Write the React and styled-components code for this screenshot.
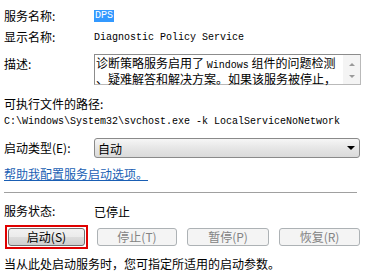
import React from "react";
import styled, { createGlobalStyle } from "styled-components";

const cjk = `"Noto Sans CJK SC", "Liberation Sans", sans-serif`;
const mono = `"Liberation Mono", "Noto Sans CJK SC", monospace`;

const GlobalStyle = createGlobalStyle`
  html, body {
    margin: 0;
    padding: 0;
    background: #ffffff;
  }
  body {
    font-family: ${cjk};
    font-size: 12px;
    color: #000;
  }
`;

const Page = styled.div`
  width: 369px;
  height: 275px;
  padding: 0 4px;
  box-sizing: border-box;
  overflow: hidden;
`;

const Row = styled.div`
  display: flex;
  align-items: ${(p) => (p.$top ? "flex-start" : "center")};
  height: ${(p) => p.$h}px;
  margin-top: ${(p) => p.$mt || 0}px;
`;

const Label = styled.div`
  width: 90px;
  flex: none;
  line-height: 14px;
  padding-top: ${(p) => p.$pt || 0}px;
`;

const Selected = styled.span`
  background: #3399ff;
  color: #fff;
  font-family: ${mono};
  font-size: 10px;
  line-height: 12px;
  padding: 0 1px;
`;

const Mono = styled.span`
  font-family: ${mono};
  font-size: 10px;
`;

const TextBox = styled.div`
  display: flex;
  width: 267px;
  height: 31px;
  box-sizing: border-box;
  border: 1px solid #b9b9b9;
  border-top-color: #8c8c8c;
  border-left-color: #8c8c8c;
`;

const TextBody = styled.div`
  flex: 1;
  padding: 1px 0 0 1px;
  line-height: 13px;
  white-space: nowrap;
`;

const ScrollBar = styled.div`
  width: 17px;
  flex: none;
  background: #f4f4f4;
  display: flex;
  flex-direction: column;
  align-items: center;
  justify-content: space-between;
  padding: 8px 0 6px;
  box-sizing: border-box;
`;

const Arrow = styled.div`
  width: 0;
  height: 0;
  border-left: 3px solid transparent;
  border-right: 3px solid transparent;
  ${(p) =>
    p.$down
      ? "border-top: 3px solid #9a9a9a;"
      : "border-bottom: 3px solid #9a9a9a;"}
`;

const Line = styled.div`
  line-height: 14px;
  margin-top: ${(p) => p.$mt || 0}px;
`;

const Select = styled.div`
  width: 266px;
  height: 20px;
  box-sizing: border-box;
  border: 1px solid #8a8a8a;
  border-radius: 3px;
  background: linear-gradient(#f6f6f6, #e6e6e6 50%, #dadada);
  display: flex;
  align-items: center;
  justify-content: space-between;
  padding: 0 4px 0 3px;
`;

const Caret = styled.div`
  width: 0;
  height: 0;
  border-left: 4px solid transparent;
  border-right: 4px solid transparent;
  border-top: 4px solid #000;
`;

const Link = styled.a`
  display: block;
  color: #1a5fb4;
  text-decoration: underline;
  line-height: 14px;
  margin-top: ${(p) => p.$mt}px;
  width: max-content;
`;

const Separator = styled.div`
  height: 1px;
  background: #a0a0a0;
  width: 353px;
  margin-top: ${(p) => p.$mt}px;
`;

const Buttons = styled.div`
  display: flex;
  align-items: center;
  margin-top: ${(p) => p.$mt}px;
  height: 24px;
`;

const Focus = styled.div`
  border: 2px solid #e00000;
  padding: 1px 1px;
  display: flex;
  margin-right: 9px;
  margin-left: 1px;
`;

const Button = styled.div`
  width: ${(p) => p.$w || 80}px;
  height: 18px;
  box-sizing: border-box;
  border-radius: 3px;
  border: 1px solid ${(p) => (p.$disabled ? "#adb2b5" : "#707070")};
  background: ${(p) =>
    p.$disabled
      ? "#f4f4f4"
      : "linear-gradient(#f2f2f2, #ebebeb 50%, #dddddd 51%, #cfcfcf)"};
  color: ${(p) => (p.$disabled ? "#838383" : "#000")};
  display: flex;
  align-items: center;
  justify-content: center;
  line-height: 14px;
  margin-right: ${(p) => p.$mr || 0}px;
`;

export default function App() {
  return (
    <Page>
      <GlobalStyle />
      <Row $h={20} $mt={6}>
        <Label>服务名称:</Label>
        <Selected>DPS</Selected>
      </Row>
      <Row $h={20} $mt={1}>
        <Label>显示名称:</Label>
        <Mono>Diagnostic Policy Service</Mono>
      </Row>
      <Row $h={31} $mt={7} $top>
        <Label $pt={3}>描述:</Label>
        <TextBox>
          <TextBody>
            诊断策略服务启用了 <Mono>Windows</Mono> 组件的问题检测
            <br />
            、疑难解答和解决方案。如果该服务被停止，
          </TextBody>
          <ScrollBar>
            <Arrow />
            <Arrow $down />
          </ScrollBar>
        </TextBox>
      </Row>
      <Line $mt={12}>可执行文件的路径:</Line>
      <Line $mt={1}>
        <Mono>C:\Windows\System32\svchost.exe -k LocalServiceNoNetwork</Mono>
      </Line>
      <Row $h={20} $mt={9}>
        <Label>启动类型(E):</Label>
        <Select>
          <span>自动</span>
          <Caret />
        </Select>
      </Row>
      <Link $mt={9}>帮助我配置服务启动选项。</Link>
      <Separator $mt={11} />
      <Row $h={14} $mt={11}>
        <Label>服务状态:</Label>
        <span>已停止</span>
      </Row>
      <Buttons $mt={7}>
        <Focus>
          <Button $w={77}>启动(S)</Button>
        </Focus>
        <Button $disabled $mr={10}>停止(T)</Button>
        <Button $disabled $w={82} $mr={10}>暂停(P)</Button>
        <Button $disabled $w={81}>恢复(R)</Button>
      </Buttons>
      <Line $mt={8}>当从此处启动服务时，您可指定所适用的启动参数。</Line>
    </Page>
  );
}
